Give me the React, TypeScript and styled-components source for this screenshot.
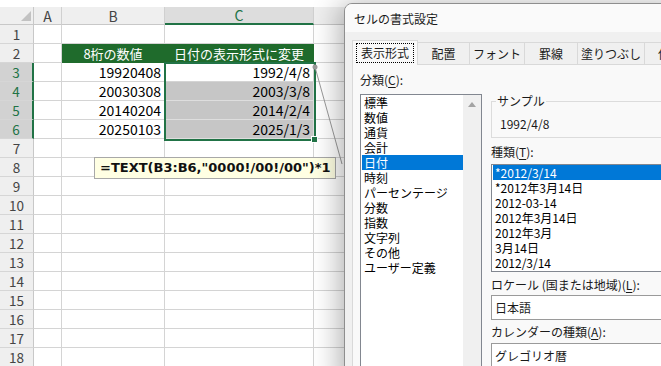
import * as React from 'react';
import styled, { createGlobalStyle } from 'styled-components';

const colors = {
  GRID: '#d4d4d4',
  HEAD_BG: '#efefef',
  HEAD_SEL: '#d2d2d2',
  HEAD_TEXT: '#444444',
  EXCEL_GREEN: '#217346',
  FILL_GREEN: '#1f6b2c',
  SEL_FILL: '#c6c6c6',
  BLUE: '#0078d7',
  PANEL: '#f9f9f9',
  BODY: '#f0f0f0',
};

const GlobalStyle = createGlobalStyle`
  html, body {
    margin: 0;
    padding: 0;
    background: #ffffff;
  }
  body {
    font-family: "Noto Sans CJK JP", "Noto Sans", sans-serif;
  }
`;

const Stage = styled.div`
  position: relative;
  width: 661px;
  height: 366px;
  overflow: hidden;
  background: #ffffff;
`;

/* ---------- spreadsheet ---------- */

const Sheet = styled.div`
  display: flex;
  flex-direction: column;
  font-family: "Noto Sans CJK JP", sans-serif;
  color: #000;
`;

const TopStrip = styled.div`
  height: 7px;
`;

const Row = styled.div<{ $h: number }>`
  display: flex;
  height: ${(p) => p.$h}px;
  flex: none;
`;

const Corner = styled.div`
  position: relative;
  width: 34px;
  flex: none;
  box-sizing: border-box;
  background: ${colors.HEAD_BG};
  border-right: 1px solid #c8c8c8;
  border-bottom: 1px solid #c8c8c8;
  &::after {
    content: '';
    position: absolute;
    right: 2px;
    bottom: 3px;
    border-style: solid;
    border-width: 0 0 10px 10px;
    border-color: transparent transparent #c2c2c2 transparent;
  }
`;

const ColHead = styled.div<{ $w: number; $sel?: boolean }>`
  width: ${(p) => p.$w}px;
  flex: none;
  box-sizing: border-box;
  display: flex;
  align-items: center;
  justify-content: center;
  font-size: 14px;
  background: ${(p) => (p.$sel ? '#dddddd' : colors.HEAD_BG)};
  color: ${(p) => (p.$sel ? colors.EXCEL_GREEN : colors.HEAD_TEXT)};
  border-right: 1px solid #d0d0d0;
  border-bottom: ${(p) => (p.$sel ? `2px solid ${colors.EXCEL_GREEN}` : '1px solid #c8c8c8')};
`;

const RowHead = styled.div<{ $sel?: boolean }>`
  width: 34px;
  flex: none;
  box-sizing: border-box;
  display: flex;
  align-items: center;
  justify-content: center;
  font-size: 13.5px;
  background: ${(p) => (p.$sel ? colors.HEAD_SEL : colors.HEAD_BG)};
  color: ${(p) => (p.$sel ? colors.EXCEL_GREEN : colors.HEAD_TEXT)};
  border-bottom: 1px solid #d6d6d6;
  border-right: ${(p) => (p.$sel ? `2px solid ${colors.EXCEL_GREEN}` : '1px solid #c8c8c8')};
`;

const Cell = styled.div<{ $w: number; $fill?: 'green' | 'sel' }>`
  width: ${(p) => p.$w}px;
  flex: none;
  box-sizing: border-box;
  display: flex;
  align-items: center;
  justify-content: flex-end;
  padding-right: 3px;
  font-size: 14px;
  background: ${(p) =>
    p.$fill === 'green' ? colors.FILL_GREEN : p.$fill === 'sel' ? colors.SEL_FILL : '#ffffff'};
  border-right: 1px solid
    ${(p) => (p.$fill === 'green' ? colors.FILL_GREEN : p.$fill === 'sel' ? '#dedede' : colors.GRID)};
  border-bottom: 1px solid
    ${(p) => (p.$fill === 'green' ? colors.FILL_GREEN : p.$fill === 'sel' ? '#dedede' : colors.GRID)};
`;

const HeadCell = styled(Cell)`
  justify-content: center;
  padding-right: 0;
  color: #ffffff;
  font-size: 13px;
`;

const Selection = styled.div`
  position: absolute;
  left: 164px;
  top: 62px;
  width: 152px;
  height: 79px;
  box-sizing: border-box;
  border: 2px solid ${colors.EXCEL_GREEN};
  pointer-events: none;
`;

const FillHandle = styled.div`
  position: absolute;
  left: 311px;
  top: 136px;
  width: 7px;
  height: 7px;
  box-sizing: border-box;
  background: ${colors.EXCEL_GREEN};
  border: 1px solid #ffffff;
`;

const Leader = styled.svg`
  position: absolute;
  left: 0;
  top: 0;
  pointer-events: none;
`;

const Callout = styled.div`
  position: absolute;
  left: 94px;
  top: 157px;
  width: 242px;
  height: 22px;
  box-sizing: border-box;
  padding-left: 5px;
  border: 1px solid #a8a8a8;
  background: #ffffe3;
  font-family: "DejaVu Sans", sans-serif;
  font-weight: bold;
  font-size: 13px;
  line-height: 20px;
  color: #111;
  white-space: nowrap;
`;

/* ---------- format cells dialog ---------- */

const Dialog = styled.div`
  position: absolute;
  left: 344px;
  top: 3px;
  width: 340px;
  height: 380px;
  display: flex;
  flex-direction: column;
  border: 1px solid #8e8e8e;
  border-top-left-radius: 8px;
  background: ${colors.BODY};
  box-shadow: -3px 3px 28px 2px rgba(0, 0, 0, 0.3);
  font-family: "Noto Sans CJK JP", sans-serif;
  font-size: 12px;
  color: #1a1a1a;
  overflow: hidden;
`;

const TitleBar = styled.div`
  height: 28px;
  flex: none;
  display: flex;
  align-items: center;
  padding-left: 9px;
  background: #fafafa;
  font-size: 12px;
`;

const TabStrip = styled.div`
  display: flex;
  align-items: flex-end;
  padding: 8px 0 0 7px;
  flex: none;
`;

const Tab = styled.div<{ $w: number; $active?: boolean }>`
  position: relative;
  z-index: ${(p) => (p.$active ? 1 : 0)};
  width: ${(p) => p.$w}px;
  height: ${(p) => (p.$active ? 25 : 22)}px;
  margin-bottom: ${(p) => (p.$active ? -1 : 0)}px;
  margin-left: -1px;
  flex: none;
  box-sizing: border-box;
  display: flex;
  align-items: center;
  justify-content: center;
  padding-bottom: ${(p) => (p.$active ? 1 : 0)}px;
  background: ${(p) => (p.$active ? colors.PANEL : colors.BODY)};
  border: 1px solid #d9d9d9;
  border-bottom: none;
  white-space: nowrap;
  overflow: hidden;
  &:first-child {
    margin-left: 0;
  }
`;

const FocusText = styled.span`
  padding: 1px 4px;
  line-height: 16px;
  border: 1px dotted #000;
`;

const Panel = styled.div`
  flex: 1;
  margin-left: 7px;
  display: grid;
  grid-template-columns: 122px 1fr;
  column-gap: 9px;
  align-items: start;
  padding: 7px 0 0 7px;
  background: ${colors.PANEL};
  border: 1px solid #d9d9d9;
  border-right: none;
`;

const Column = styled.div<{ $top?: number }>`
  display: flex;
  flex-direction: column;
  margin-top: ${(p) => p.$top ?? 0}px;
`;

const Label = styled.div<{ $gap?: number }>`
  height: 16px;
  line-height: 16px;
  margin-top: ${(p) => p.$gap ?? 0}px;
  white-space: nowrap;
`;

const Key = styled.span`
  text-decoration: underline;
  text-underline-offset: 2px;
`;

const ListBox = styled.div<{ $h: number; $gap: number }>`
  height: ${(p) => p.$h}px;
  margin-top: ${(p) => p.$gap}px;
  box-sizing: border-box;
  display: flex;
  background: #ffffff;
  border: 1px solid #828790;
  border-right-width: ${(p) => (p.$h > 200 ? 1 : 0)}px;
  overflow: hidden;
`;

const Items = styled.div`
  flex: 1;
  display: flex;
  flex-direction: column;
`;

const Item = styled.div<{ $sel?: boolean }>`
  height: 15px;
  line-height: 15px;
  margin-left: 1px;
  padding-left: 2px;
  white-space: nowrap;
  overflow: hidden;
  background: ${(p) => (p.$sel ? colors.BLUE : 'transparent')};
  color: ${(p) => (p.$sel ? '#ffffff' : '#000000')};
`;

const ScrollTrack = styled.div`
  width: 18px;
  flex: none;
  display: flex;
  justify-content: center;
  padding-top: 7px;
  background: #f0f0f0;
`;

const UpArrow = styled.div`
  width: 0;
  height: 0;
  border-style: solid;
  border-width: 0 4px 5px 4px;
  border-color: transparent transparent #a3a3a3 transparent;
`;

const Group = styled.fieldset`
  margin: 0;
  padding: 0 0 0 8px;
  border: 1px solid #dcdcdc;
  border-right: none;
  min-width: 0;
`;

const Legend = styled.legend`
  padding: 0 1px;
  margin-left: -4px;
  line-height: 16px;
  font-size: 12px;
`;

const SampleValue = styled.div`
  line-height: 16px;
  margin: 7px 0 5px;
`;

const Field = styled.div<{ $gap: number }>`
  height: 25px;
  margin-top: ${(p) => p.$gap}px;
  box-sizing: border-box;
  padding-left: 3px;
  line-height: 23px;
  background: #ffffff;
  border: 1px solid #9a9a9a;
  border-right: none;
`;

const COL_W = { A: 28, B: 103, C: 149, D: 130 };

const dataRows = [
  ['19920408', '1992/4/8'],
  ['20030308', '2003/3/8'],
  ['20140204', '2014/2/4'],
  ['20250103', '2025/1/3'],
];

const categories = [
  '標準', '数値', '通貨', '会計', '日付', '時刻', 'パーセンテージ',
  '分数', '指数', '文字列', 'その他', 'ユーザー定義',
];

const dateTypes = [
  '*2012/3/14', '*2012年3月14日', '2012-03-14', '2012年3月14日',
  '2012年3月', '3月14日', '2012/3/14',
];

const tabs = [
  { label: '表示形式', w: 66 },
  { label: '配置', w: 53 },
  { label: 'フォント', w: 56 },
  { label: '罫線', w: 54 },
  { label: '塗りつぶし', w: 68 },
  { label: '保護', w: 52 },
];

const EmptyRow: React.FC<{ n: number }> = ({ n }) => (
  <Row $h={19}>
    <RowHead>{n}</RowHead>
    <Cell $w={COL_W.A} />
    <Cell $w={COL_W.B} />
    <Cell $w={COL_W.C} />
    <Cell $w={COL_W.D} />
  </Row>
);

const Spreadsheet: React.FC = () => (
  <Sheet>
    <TopStrip />
    <Row $h={18}>
      <Corner />
      <ColHead $w={COL_W.A}>A</ColHead>
      <ColHead $w={COL_W.B}>B</ColHead>
      <ColHead $w={COL_W.C} $sel>C</ColHead>
      <ColHead $w={COL_W.D} />
    </Row>
    <EmptyRow n={1} />
    <Row $h={19}>
      <RowHead>2</RowHead>
      <Cell $w={COL_W.A} />
      <HeadCell $w={COL_W.B} $fill="green">8桁の数値</HeadCell>
      <HeadCell $w={COL_W.C} $fill="green">日付の表示形式に変更</HeadCell>
      <Cell $w={COL_W.D} />
    </Row>
    {dataRows.map(([num, date], i) => (
      <Row $h={19} key={num}>
        <RowHead $sel>{i + 3}</RowHead>
        <Cell $w={COL_W.A} />
        <Cell $w={COL_W.B}>{num}</Cell>
        <Cell $w={COL_W.C} $fill={i > 0 ? 'sel' : undefined}>{date}</Cell>
        <Cell $w={COL_W.D} />
      </Row>
    ))}
    {Array.from({ length: 12 }, (_, i) => (
      <EmptyRow n={i + 7} key={i} />
    ))}
  </Sheet>
);

const FormatDialog: React.FC = () => (
  <Dialog>
    <TitleBar>セルの書式設定</TitleBar>
    <TabStrip>
      {tabs.map((t, i) => (
        <Tab key={t.label} $w={t.w} $active={i === 0}>
          {i === 0 ? <FocusText>{t.label}</FocusText> : t.label}
        </Tab>
      ))}
    </TabStrip>
    <Panel>
      <Column>
        <Label>
          分類(<Key>C</Key>):
        </Label>
        <ListBox $h={290} $gap={6}>
          <Items>
            {categories.map((c) => (
              <Item key={c} $sel={c === '日付'}>
                {c}
              </Item>
            ))}
          </Items>
          <ScrollTrack>
            <UpArrow />
          </ScrollTrack>
        </ListBox>
      </Column>
      <Column $top={21}>
        <Group>
          <Legend>サンプル</Legend>
          <SampleValue>1992/4/8</SampleValue>
        </Group>
        <Label $gap={6}>
          種類(<Key>T</Key>):
        </Label>
        <ListBox $h={108} $gap={4}>
          <Items>
            {dateTypes.map((d, i) => (
              <Item key={d + i} $sel={i === 0}>
                {d}
              </Item>
            ))}
          </Items>
        </ListBox>
        <Label $gap={5}>
          ロケール (国または地域)(<Key>L</Key>):
        </Label>
        <Field $gap={2}>日本語</Field>
        <Label $gap={4}>
          カレンダーの種類(<Key>A</Key>):
        </Label>
        <Field $gap={3}>グレゴリオ暦</Field>
      </Column>
    </Panel>
  </Dialog>
);

const App: React.FC = () => (
  <>
    <GlobalStyle />
    <Stage>
      <Spreadsheet />
      <Selection />
      <FillHandle />
      <Leader width={661} height={366}>
        <line x1={315} y1={67} x2={342} y2={164} stroke="#9a9a9a" strokeWidth={1} />
        <circle cx={315} cy={67} r={2.5} fill="#9a9a9a" />
      </Leader>
      <Callout>=TEXT(B3:B6,"0000!/00!/00")*1</Callout>
      <FormatDialog />
    </Stage>
  </>
);

export default App;
